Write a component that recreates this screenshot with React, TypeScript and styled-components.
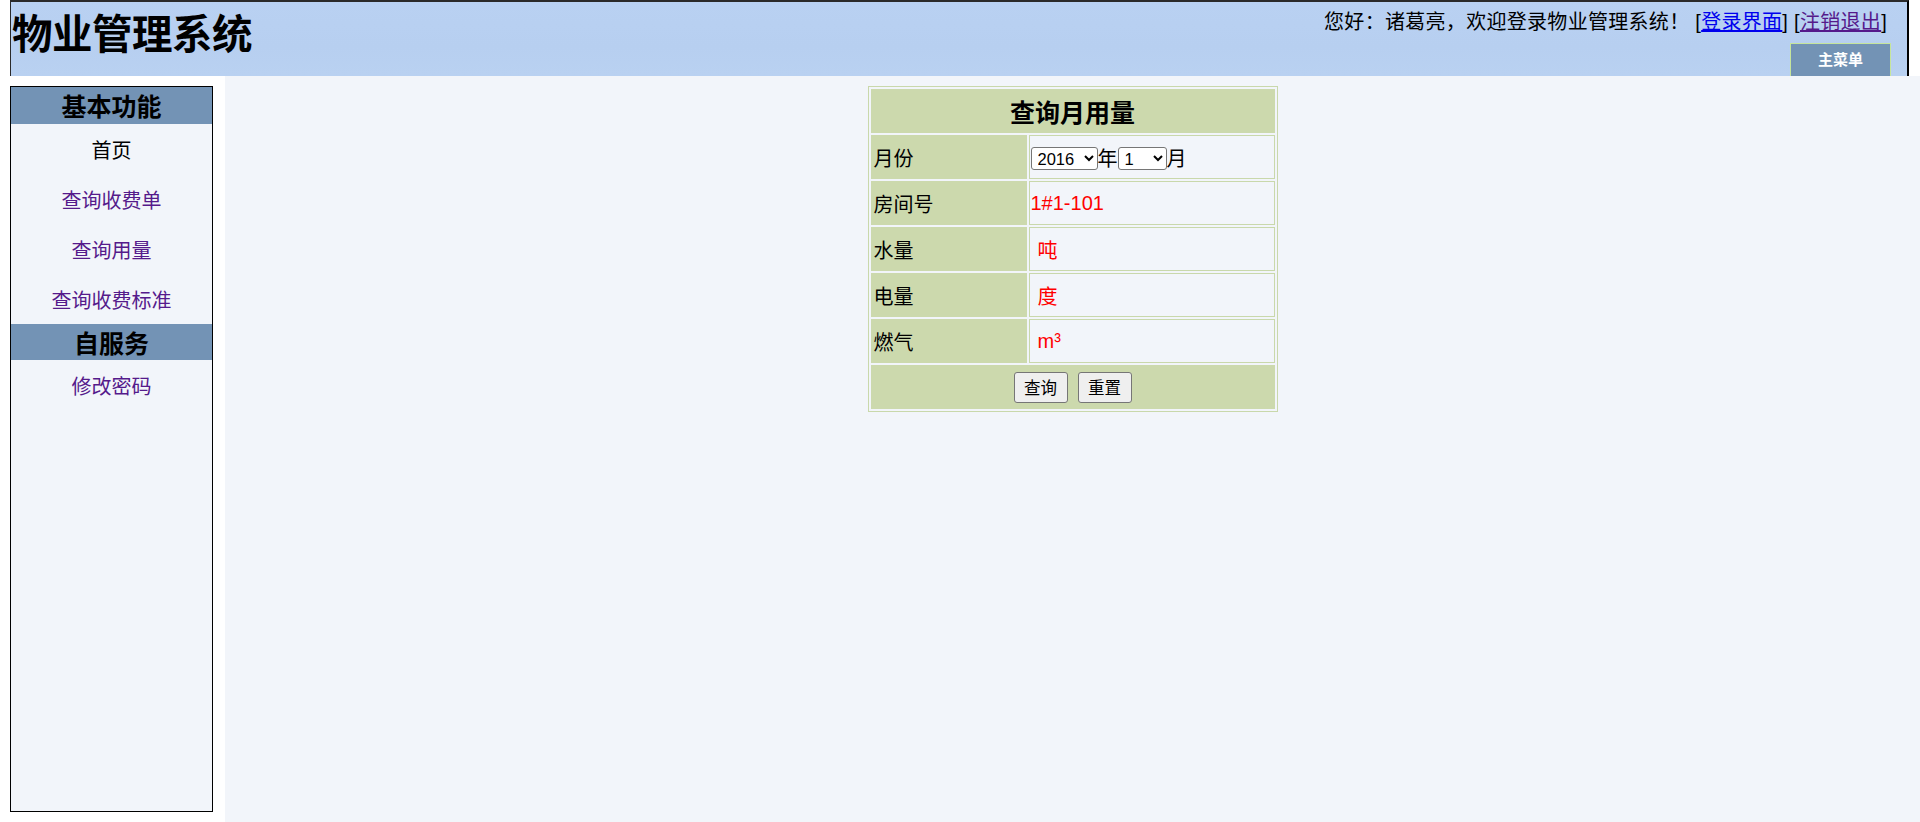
import React from "react";
import styled, { createGlobalStyle } from "styled-components";

const GlobalStyle = createGlobalStyle`
  html, body {
    margin: 0;
    padding: 0;
    background: #fff;
  }
  body {
    font-family: "Liberation Sans", "Noto Sans CJK SC", sans-serif;
    font-size: 20px;
    color: #000;
  }
  * {
    box-sizing: border-box;
  }
`;

interface NavItem {
  label: string;
  visited?: boolean;
}

const basicItems: NavItem[] = [
  { label: "首页" },
  { label: "查询收费单", visited: true },
  { label: "查询用量", visited: true },
  { label: "查询收费标准", visited: true },
];

const selfItems: NavItem[] = [{ label: "修改密码", visited: true }];

const App: React.FC = () => {
  return (
    <Page>
      <GlobalStyle />
      <Header>
        <Title>物业管理系统</Title>
        <HeaderRight>
          <Greeting>
            您好：诸葛亮，欢迎登录物业管理系统！&nbsp;[
            <HeaderLink href="#">登录界面</HeaderLink>] [
            <HeaderLink href="#" visited>
              注销退出
            </HeaderLink>
            ]
          </Greeting>
          <MenuTab>主菜单</MenuTab>
        </HeaderRight>
      </Header>

      <Content>
        <SideColumn>
          <Sidebar>
            <SideHeading>基本功能</SideHeading>
            {basicItems.map((item) => (
              <SideLink key={item.label} href="#" visited={item.visited}>
                {item.label}
              </SideLink>
            ))}
            <SideHeading small>自服务</SideHeading>
            {selfItems.map((item) => (
              <SideLink key={item.label} href="#" visited={item.visited}>
                {item.label}
              </SideLink>
            ))}
          </Sidebar>
        </SideColumn>

        <Main>
          <QueryTable>
            <tbody>
              <tr>
                <TitleCell colSpan={2}>查询月用量</TitleCell>
              </tr>
              <tr>
                <LabelCell>月份</LabelCell>
                <ValueCell>
                  <Select defaultValue="2016" width={67}>
                    <option>2014</option>
                    <option>2015</option>
                    <option>2016</option>
                  </Select>
                  年
                  <Select defaultValue="1" width={49}>
                    {Array.from({ length: 12 }, (_, i) => (
                      <option key={i}>{i + 1}</option>
                    ))}
                  </Select>
                  月
                </ValueCell>
              </tr>
              <tr>
                <LabelCell>房间号</LabelCell>
                <ValueCell>
                  <RedText>1#1-101</RedText>
                </ValueCell>
              </tr>
              <tr>
                <LabelCell>水量</LabelCell>
                <ValueCell>
                  <Unit>吨</Unit>
                </ValueCell>
              </tr>
              <tr>
                <LabelCell>电量</LabelCell>
                <ValueCell>
                  <Unit>度</Unit>
                </ValueCell>
              </tr>
              <tr>
                <LabelCell>燃气</LabelCell>
                <ValueCell>
                  <Unit>m³</Unit>
                </ValueCell>
              </tr>
              <tr>
                <ButtonCell colSpan={2}>
                  <Button type="button">查询</Button>
                  <Button type="button">重置</Button>
                </ButtonCell>
              </tr>
            </tbody>
          </QueryTable>
        </Main>
      </Content>
    </Page>
  );
};

export default App;

const Page = styled.div`
  width: 1920px;
  min-height: 822px;
  display: flex;
  flex-direction: column;
`;

const Header = styled.div`
  margin-left: 10px;
  width: 1899px;
  height: 76px;
  border-top: 2px solid #2a2a2a;
  border-left: 1px solid #2a2a2a;
  border-right: 2px solid #000;
  background: linear-gradient(180deg, #b9d1f2 0%, #b7cff0 60%, #b9d1f1 100%);
  display: flex;
  justify-content: space-between;
  align-items: flex-start;
`;

const Title = styled.h1`
  margin: 8px 0 0 1px;
  font-family: "Noto Sans CJK SC", sans-serif;
  font-size: 40.5px;
  font-weight: 700;
  line-height: 44px;
  letter-spacing: -0.5px;
`;

const HeaderRight = styled.div`
  height: 100%;
  display: flex;
  flex-direction: column;
  align-items: flex-end;
  justify-content: space-between;
  padding-right: 16px;
`;

const Greeting = styled.div`
  margin-top: 7px;
  margin-right: 4px;
  font-size: 20px;
  line-height: 26px;
  letter-spacing: 0.3px;
  white-space: nowrap;
`;

const HeaderLink = styled.a<{ visited?: boolean }>`
  color: ${({ visited }) => (visited ? "#551a8b" : "#0000ee")};
  text-decoration: underline;
`;

const MenuTab = styled.div`
  width: 101px;
  height: 33px;
  background: #7393b5;
  border: 1px solid #c6e59c;
  border-bottom: none;
  color: #fff;
  font-size: 15px;
  font-weight: 700;
  line-height: 32px;
  text-align: center;
`;

const Content = styled.div`
  flex: 1;
  display: flex;
  min-height: 746px;
`;

const SideColumn = styled.div`
  width: 225px;
  flex-shrink: 0;
  padding: 10px 0 0 10px;
  background: #fff;
`;

const Sidebar = styled.nav`
  width: 203px;
  height: 726px;
  border: 1px solid #000;
  background: #f2f5fa;
  display: flex;
  flex-direction: column;
`;

const SideHeading = styled.div<{ small?: boolean }>`
  height: ${({ small }) => (small ? "36px" : "37px")};
  background: #7393b5;
  font-family: "Noto Sans CJK SC", sans-serif;
  font-size: 25px;
  font-weight: 700;
  line-height: ${({ small }) => (small ? "36px" : "37px")};
  text-align: center;
`;

const SideLink = styled.a<{ visited?: boolean }>`
  display: block;
  height: 50px;
  padding-top: 5px;
  line-height: 45px;
  text-align: center;
  font-size: 20px;
  color: ${({ visited }) => (visited ? "#551a8b" : "#000")};
  text-decoration: none;
`;

const Main = styled.main`
  flex: 1;
  background: #f2f5fa;
  display: flex;
  justify-content: center;
  align-items: flex-start;
  padding-top: 10px;
`;

const QueryTable = styled.table`
  width: 410px;
  border: 1px solid #c9d8ab;
  border-spacing: 2px;
  border-collapse: separate;
`;

const TitleCell = styled.td`
  height: 44px;
  padding: 0;
  background: #ccd9ad;
  text-align: center;
  font-family: "Noto Sans CJK SC", sans-serif;
  font-size: 25px;
  font-weight: 700;
`;

const LabelCell = styled.td`
  width: 156px;
  height: 44px;
  padding: 0 3px;
  background: #ccd9ad;
  font-size: 20px;
`;

const ValueCell = styled.td`
  height: 44px;
  padding: 0 1px;
  border: 1px solid #c9d8ab;
  background: #f2f5fa;
  font-size: 20px;
  white-space: nowrap;
`;

const Select = styled.select<{ width: number }>`
  width: ${({ width }) => width}px;
  height: 23px;
  padding: 0 0 0 2px;
  vertical-align: 1px;
  font-family: "Liberation Sans", sans-serif;
  font-size: 16.5px;
  color: #000;
  background: #fff;
  border: 1px solid #767676;
  border-radius: 3px;
`;

const RedText = styled.span`
  color: #ff0000;
  font-size: 20px;
`;

const Unit = styled(RedText)`
  padding-left: 7px;
`;

const ButtonCell = styled.td`
  height: 44px;
  padding: 0;
  background: #ccd9ad;
  text-align: center;
`;

const Button = styled.button`
  width: 54px;
  height: 31px;
  margin: 0 5px;
  padding: 0;
  font-family: "Noto Sans CJK SC", sans-serif;
  font-size: 16.5px;
  line-height: 29px;
  color: #000;
  background: #efefef;
  border: 1px solid #767676;
  border-radius: 3px;
`;
